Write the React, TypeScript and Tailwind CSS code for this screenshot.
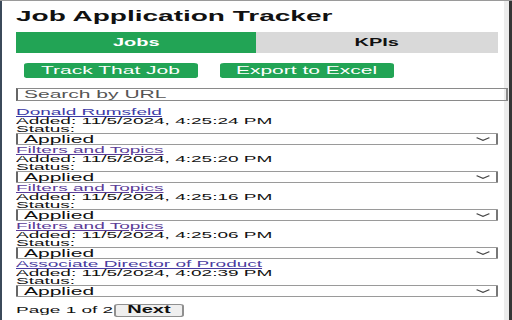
import React from "react";

const jobs = [
  { title: "Donald Rumsfeld", added: "11/5/2024, 4:25:24 PM", color: "text-[#3c3aa6]" },
  { title: "Filters and Topics", added: "11/5/2024, 4:25:20 PM", color: "text-[#5b3c97]" },
  { title: "Filters and Topics", added: "11/5/2024, 4:25:16 PM", color: "text-[#5b3c97]" },
  { title: "Filters and Topics", added: "11/5/2024, 4:25:06 PM", color: "text-[#5b3c97]" },
  { title: "Associate Director of Product", added: "11/5/2024, 4:02:39 PM", color: "text-[#4a3ca0]" },
];

function Chevron() {
  return (
    <svg width="7" height="4" viewBox="0 0 7 4" className="shrink-0">
      <path d="M0.3 0.6 L3.5 3.3 L6.7 0.6" fill="none" stroke="#444" strokeWidth="0.9" />
    </svg>
  );
}

export default function App() {
  return (
    <div className="w-[512px] h-[320px] overflow-hidden bg-white flex border-t border-[#9a9a9a] font-['Liberation_Sans',Arial,sans-serif] text-[#111]">
      <div className="w-[2px] shrink-0 bg-[#3b4a5a]" />
      <div className="w-[502px] shrink-0">
        <div className="w-[251px] origin-top-left [transform:scaleX(2)] pl-[7px] pr-[3.5px] flex flex-col">
          <h1 className="mt-[7px] text-[14px] leading-[16px] font-bold">Job Application Tracker</h1>

          <div className="mt-[8px] h-[21px] flex text-[10px] font-bold">
            <div className="flex-1 bg-[#22a455] text-white flex items-center justify-center">Jobs</div>
            <div className="flex-1 bg-[#d9d9d9] text-[#111] flex items-center justify-center">KPIs</div>
          </div>

          <div className="mt-[10px] h-[15px] flex gap-[11px] pl-[4px] text-[10.5px] text-white">
            <button className="w-[86.5px] h-[15px] bg-[#22a455] rounded-[2px] flex items-center justify-center leading-none">
              Track That Job
            </button>
            <button className="w-[87.5px] h-[15px] bg-[#22a455] rounded-[2px] flex items-center justify-center leading-none">
              Export to Excel
            </button>
          </div>

          <input
            className="mt-[10px] w-[246px] h-[13px] border border-[#8a8a8a] border-l-[#666] pl-[3px] text-[10.5px] outline-none placeholder:text-[#555] shrink-0"
            placeholder="Search by URL"
          />

          <div className="mt-[6px] flex flex-col">
            {jobs.map((j, i) => (
              <div key={i} className="flex flex-col">
                <a href="#" className={`text-[9.5px] leading-[9px] underline ${j.color}`}>
                  {j.title}
                </a>
                <div className="text-[9.5px] leading-[9px]">Added: {j.added}</div>
                <div className="text-[9.5px] leading-[8px]">Status:</div>
                <div className="h-[12px] border border-[#9a9a9a] border-l-[#666] border-r-[#777] rounded-[1px] flex items-center justify-between pl-[3px] pr-[2.5px] bg-white">
                  <span className="text-[10.5px] leading-none">Applied</span>
                  <Chevron />
                </div>
              </div>
            ))}
          </div>

          <div className="mt-[6px] flex items-baseline">
            <span className="text-[9.5px]">Page 1 of 2</span>
            <button className="h-[13px] px-[6px] bg-[#efefef] border border-[#8f8f8f] rounded-[2px] text-[10px] font-bold leading-none flex items-center">
              Next
            </button>
          </div>
        </div>
      </div>
      <div className="w-[5px] shrink-0 bg-[#ececec]" />
      <div className="flex-1 bg-[#353535]" />
    </div>
  );
}
